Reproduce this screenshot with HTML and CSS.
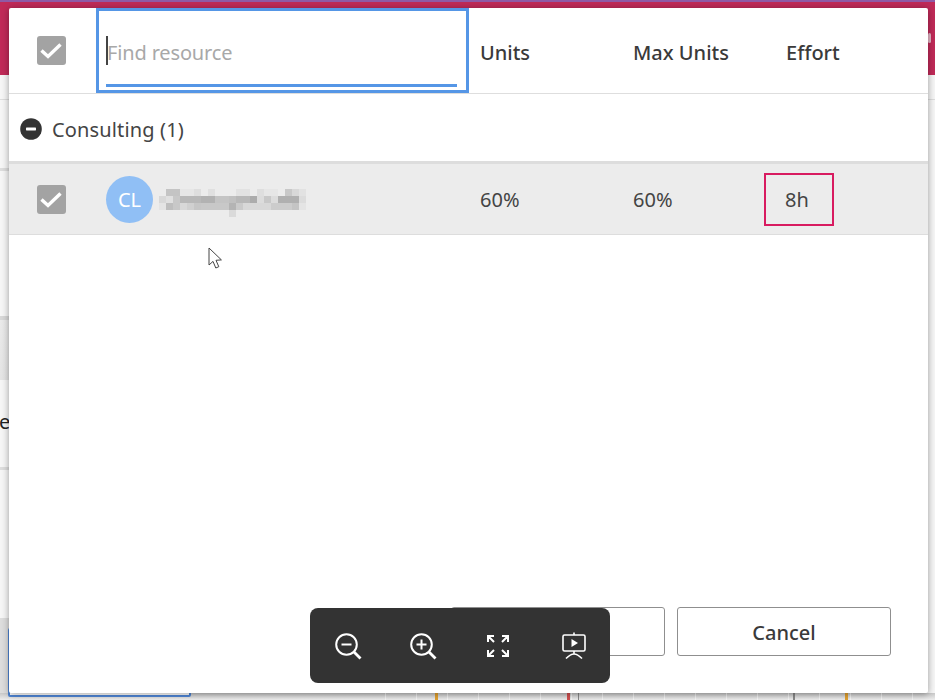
FILE: index.html
```html
<!DOCTYPE html>
<html lang="en">
<head>
<meta charset="utf-8">
<title>Assign resources</title>
<link rel="stylesheet" href="styles.css">
</head>
<body>
<div class="backdrop">
  <div class="app-header"><i class="hdr-glyph"></i></div>
  <div class="bg-left">
    <div class="bg-line-a"></div>
    <div class="bg-line-b"></div>
    <div class="bg-row-a"></div>
    <div class="bg-row-b"><span class="bg-letter">e</span></div>
    <div class="bg-row-c"></div>
    <div class="bg-row-d"></div>
  </div>
  <div class="gantt-strip">
    <div class="gantt-grid"></div>
    <i class="tick tick-a"></i><i class="tick tick-b"></i><i class="tick tick-e"></i><i class="tick tick-c"></i><i class="tick tick-d"></i>
  </div>
  <div class="bg-selected"></div>
</div>

<main class="modal">
  <header class="grid-row head-row">
    <div class="cell-check">
      <span class="check"><svg viewBox="0 0 28 28" width="28" height="28"><path d="M4.500 14.500l6.500 6L23.500 8.500" fill="none" stroke="#fff" stroke-width="3.400"/></svg></span>
    </div>
    <div class="search-cell">
      <span class="caret"></span>
      <span class="placeholder">Find resource</span>
      <span class="search-line"></span>
    </div>
    <div class="col-units">Units</div>
    <div class="col-max">Max Units</div>
    <div class="col-effort">Effort</div>
  </header>

  <div class="group-row">
    <svg class="collapse" viewBox="0 0 22 22" width="22" height="22"><circle cx="11" cy="11" r="10.800" fill="#333"/><rect x="6" y="9.600" width="10" height="2.800" rx="0.600" fill="#fff"/></svg>
    <span class="group-label">Consulting (1)</span>
  </div>

  <div class="grid-row res-row">
    <div class="cell-check">
      <span class="check"><svg viewBox="0 0 28 28" width="28" height="28"><path d="M4.500 14.500l6.500 6L23.500 8.500" fill="none" stroke="#fff" stroke-width="3.400"/></svg></span>
    </div>
    <div class="res-name">
      <span class="avatar">CL</span>
      <svg class="mosaic" viewBox="0 0 147 28" width="147" height="28" shape-rendering="crispEdges">
        <g>
          <rect x="7" y="0" width="14" height="7" fill="#c4c4c4"/><rect x="21" y="0" width="14" height="7" fill="#e6e6e6"/><rect x="35" y="0" width="7" height="7" fill="#dedede"/><rect x="49" y="0" width="7" height="7" fill="#e0e0e0"/><rect x="77" y="0" width="14" height="7" fill="#e2e2e2"/><rect x="98" y="0" width="7" height="7" fill="#dedede"/><rect x="105" y="0" width="14" height="7" fill="#e6e6e6"/><rect x="126" y="0" width="7" height="7" fill="#c8c8c8"/><rect x="133" y="0" width="7" height="7" fill="#d8d8d8"/><rect x="140" y="0" width="7" height="7" fill="#e2e2e2"/>
          <rect x="0" y="7" width="7" height="7" fill="#d8d8d8"/><rect x="7" y="7" width="7" height="7" fill="#e0e0e0"/><rect x="14" y="7" width="7" height="7" fill="#c8c8c8"/><rect x="21" y="7" width="21" height="7" fill="#b8b8b8"/><rect x="42" y="7" width="14" height="7" fill="#b2b2b2"/><rect x="56" y="7" width="14" height="7" fill="#c4c4c4"/><rect x="70" y="7" width="7" height="7" fill="#c0c0c0"/><rect x="77" y="7" width="14" height="7" fill="#b8b8b8"/><rect x="91" y="7" width="7" height="7" fill="#acacac"/><rect x="98" y="7" width="7" height="7" fill="#dcdcdc"/><rect x="105" y="7" width="7" height="7" fill="#c8c8c8"/><rect x="112" y="7" width="7" height="7" fill="#dcdcdc"/><rect x="119" y="7" width="21" height="7" fill="#b0b0b0"/><rect x="140" y="7" width="7" height="7" fill="#dcdcdc"/>
          <rect x="0" y="14" width="7" height="7" fill="#e4e4e4"/><rect x="7" y="14" width="7" height="7" fill="#bebebe"/><rect x="14" y="14" width="7" height="7" fill="#c8c8c8"/><rect x="21" y="14" width="7" height="7" fill="#d8d8d8"/><rect x="28" y="14" width="7" height="7" fill="#d0d0d0"/><rect x="35" y="14" width="7" height="7" fill="#c6c6c6"/><rect x="42" y="14" width="28" height="7" fill="#c8c8c8"/><rect x="70" y="14" width="7" height="7" fill="#b4b4b4"/><rect x="77" y="14" width="7" height="7" fill="#cacaca"/><rect x="84" y="14" width="28" height="7" fill="#d8d8d8"/><rect x="112" y="14" width="21" height="7" fill="#cccccc"/><rect x="133" y="14" width="7" height="7" fill="#c4c4c4"/><rect x="140" y="14" width="7" height="7" fill="#e4e4e4"/>
          <rect x="70" y="21" width="7" height="7" fill="#dadada"/>
        </g>
      </svg>
    </div>
    <div class="col-units">60%</div>
    <div class="col-max">60%</div>
    <div class="col-effort"><span class="effort-box">8h</span></div>
  </div>

  <div class="modal-body"></div>

  <footer class="modal-foot">
    <button class="btn" type="button"></button>
    <button class="btn" type="button">Cancel</button>
  </footer>
</main>

<svg class="pointer" viewBox="0 0 16 24" width="16" height="24"><path d="M1 1v17l4-3.600 2.800 6.600 3-1.300-2.800-6.400 5.400-.4z" fill="#fff" stroke="#444" stroke-width="1"/></svg>

<div class="zoombar">
  <svg viewBox="0 0 28 28" width="28" height="28" fill="none" stroke="#fff" stroke-width="2"><circle cx="12.500" cy="12.500" r="10.300"/><path d="M7.500 12.500h10"/><path d="M20 20l6.500 6.500" stroke-width="2.800"/></svg>
  <svg viewBox="0 0 28 28" width="28" height="28" fill="none" stroke="#fff" stroke-width="2"><circle cx="12.500" cy="12.500" r="10.300"/><path d="M7.500 12.500h10M12.500 7.500v10"/><path d="M20 20l6.500 6.500" stroke-width="2.800"/></svg>
  <svg viewBox="0 0 24 24" width="24" height="24" fill="none" stroke="#fff" stroke-width="2"><path d="M2 8V2h6M2 2l6 6M16 2h6v6M22 2l-6 6M2 16v6h6M2 22l6-6M22 16v6h-6M22 22l-6-6"/></svg>
  <svg class="present" viewBox="0 0 26 28" width="26" height="28" fill="none" stroke="#fff" stroke-width="1.600"><rect x="2" y="3" width="22" height="16" rx="1.500"/><path d="M13 0.500V3M13 19v3M5 26.500c3-3 5-4.500 8-4.500s5 1.500 8 4.500"/><path d="M10.500 7l6.500 4-6.500 4z" fill="#fff" stroke="none"/></svg>
</div>
</body>
</html>
```
FILE: styles.css
```css
* { box-sizing: border-box; }
html, body { margin: 0; height: 100%; overflow: hidden; }
body { position: relative; width: 935px; height: 700px; background: #f6f6f6; font-family: "Noto Sans", "Open Sans", sans-serif; color: #3a3a3a; }

.backdrop { position: absolute; inset: 0; display: flex; flex-direction: column; }
.app-header { position: relative; height: 75px; background: #c02a58; border-top: 2px solid #8f5aa5; }
.hdr-glyph { position: absolute; left: 928px; top: 31px; width: 3px; height: 10px; border-radius: 2px; background: #e4b4c4; }
.bg-left { flex: 1; position: relative; }
.bg-line-a { position: absolute; left: 0; right: 0; top: 24px; height: 1px; background: #ddd; }
.bg-line-b { position: absolute; left: 0; width: 9px; top: 93px; height: 3px; background: #ddd; }
.bg-row-a { position: absolute; left: 0; width: 9px; top: 241px; height: 64px; background: linear-gradient(#d8d8d8 4px, #eaeaea 4px, #e4e4e4); }
.bg-row-b { position: absolute; left: 0; right: 0; top: 305px; height: 88px; }
.bg-letter { position: absolute; left: -1px; top: 28px; font-size: 20px; color: #222; }
.bg-row-c { position: absolute; left: 0; width: 9px; top: 392px; height: 3px; background: #ddd; }
.bg-row-d { position: absolute; left: 0; width: 9px; top: 543px; height: 82px; background: #ddd; }
.gantt-strip { position: absolute; left: 0; right: 0; top: 693px; height: 7px; background: linear-gradient(#c8c8c8, #eeeeee); }
.gantt-grid { position: absolute; left: 355px; right: 0; top: 0; bottom: 0; background: repeating-linear-gradient(90deg, transparent 0 30px, rgba(255,255,255,.6) 30px 31px); }
.bg-selected { position: absolute; left: 8px; top: 628px; width: 183px; height: 69px; border: 2px solid #4f86d6; border-radius: 2px; background: #fff; }
.tick { position: absolute; top: 0; bottom: 0; width: 3px; }
.tick-a { left: 435px; background: #e0a030; }
.tick-b { left: 567px; background: #d05050; }
.tick-e { left: 578px; width: 1px; background: #888; }
.tick-c { left: 793px; width: 2px; background: #888; }
.tick-d { left: 845px; background: #e0a030; }

.modal { position: absolute; left: 9px; top: 8px; width: 919px; height: 685px; background: #fff; border-radius: 2px; box-shadow: 0 1px 7px rgba(0,0,0,.38); display: flex; flex-direction: column; }
.grid-row { display: grid; grid-template-columns: 87px 373px 153px 153px 1fr; align-items: center; }
.head-row { height: 86px; border-bottom: 1px solid #dedede; font-size: 20px; font-weight: 500; }
.col-units, .col-max, .col-effort { padding-left: 11px; }
.head-row .col-units, .head-row .col-max, .head-row .col-effort { padding-top: 3px; }
.res-row .col-units, .res-row .col-max, .res-row .col-effort { color: #444; }
.cell-check { display: flex; justify-content: center; padding-right: 3px; }
.check { width: 29px; height: 29px; background: #a3a3a3; border-radius: 3px; display: block; }
.check svg { display: block; }
.search-cell { position: relative; height: 85px; border: 3px solid #5596e6; display: flex; align-items: center; padding-left: 8px; }
.caret { position: absolute; left: 7px; top: 25px; width: 1.500px; height: 29px; background: #444; }
.placeholder { color: #a8a8a8; font-weight: 400; padding-top: 4px; letter-spacing: -.15px; }
.search-line { position: absolute; left: 7px; right: 9px; bottom: 3px; height: 3px; background: #5596e6; }

.group-row { height: 70px; display: flex; align-items: center; gap: 10px; padding: 2px 0 0 11px; font-size: 20px; color: #444; border-bottom: 3px solid #ddd; }
.group-label { padding-top: 1px; letter-spacing: .15px; }

.res-row { height: 71px; background: #ececec; border-bottom: 1px solid #ddd; font-size: 20px; }
.res-name { display: flex; align-items: center; gap: 6px; padding-left: 10px; }
.avatar { width: 47px; height: 47px; border-radius: 50%; background: #90bff5; color: #fff; display: flex; align-items: center; justify-content: center; font-size: 20px; }
.mosaic { display: block; margin-top: 8px; }
.effort-box { display: inline-flex; width: 70px; height: 53px; margin-left: -22px; padding: 1px 4px 0 0; border: 2px solid #d81b60; align-items: center; justify-content: center; }

.modal-body { flex: 1; }
.modal-foot { display: flex; justify-content: flex-end; gap: 12px; padding: 0 37px 37px 0; }
.btn { width: 214px; height: 49px; padding-top: 2px; background: #fff; border: 1px solid #8f8f8f; border-radius: 3px; font: 500 20px "Noto Sans", "Open Sans", sans-serif; color: #3a3a3a; }

.pointer { position: absolute; left: 208px; top: 247px; }
.zoombar { position: absolute; left: 310px; top: 608px; width: 300px; height: 75px; background: #333; border-radius: 8px; display: grid; grid-template-columns: repeat(4, 75px); align-items: center; justify-items: center; }
.present { margin-left: 2px; }
```
